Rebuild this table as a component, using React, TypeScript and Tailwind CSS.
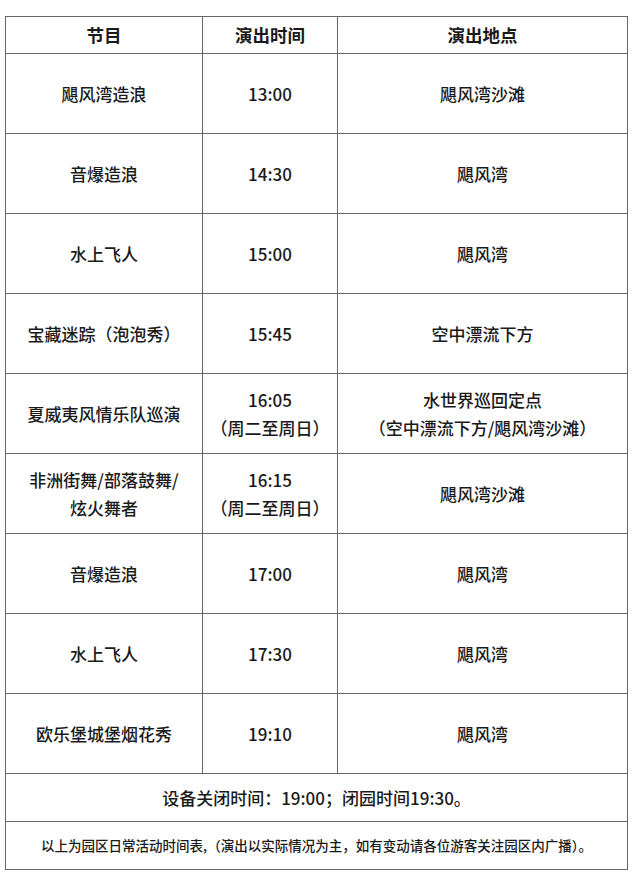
import React from "react";

const rows: [string[], string[], string[]][] = [
  [["飓风湾造浪"], ["13:00"], ["飓风湾沙滩"]],
  [["音爆造浪"], ["14:30"], ["飓风湾"]],
  [["水上飞人"], ["15:00"], ["飓风湾"]],
  [["宝藏迷踪（泡泡秀）"], ["15:45"], ["空中漂流下方"]],
  [["夏威夷风情乐队巡演"], ["16:05", "（周二至周日）"], ["水世界巡回定点", "（空中漂流下方/飓风湾沙滩）"]],
  [["非洲街舞/部落鼓舞/", "炫火舞者"], ["16:15", "（周二至周日）"], ["飓风湾沙滩"]],
  [["音爆造浪"], ["17:00"], ["飓风湾"]],
  [["水上飞人"], ["17:30"], ["飓风湾"]],
  [["欧乐堡城堡烟花秀"], ["19:10"], ["飓风湾"]],
];

function Cell({ lines, bold }: { lines: string[]; bold?: boolean }) {
  return (
    <div
      className={`flex flex-col items-center justify-center border-r border-b border-[#666666] text-center leading-[28px] ${
        bold ? "h-[37px] font-bold text-[17.5px]" : "h-[80px] font-medium text-[17px]"
      }`}
    >
      {lines.map((l, i) => (
        <div key={i}>{l}</div>
      ))}
    </div>
  );
}

export default function App() {
  return (
    <div
      className="w-[642px] h-[884px] bg-white pt-[16px] pl-[5px] text-[#1a1a1a]"
      style={{ fontFamily: '"Noto Sans CJK SC", "Noto Sans", sans-serif' }}
    >
      <div className="w-[623px] border-l border-t border-[#666666]">
        <div className="grid grid-cols-[197px_135px_290px]">
          <Cell lines={["节目"]} bold />
          <Cell lines={["演出时间"]} bold />
          <Cell lines={["演出地点"]} bold />
          {rows.map((r, i) => (
            <React.Fragment key={i}>
              <Cell lines={r[0]} />
              <Cell lines={r[1]} />
              <Cell lines={r[2]} />
            </React.Fragment>
          ))}
        </div>
        <div className="flex h-[48px] items-center justify-center border-r border-b border-[#666666] text-[17px] font-medium">
          设备关闭时间：19:00；闭园时间19:30。
        </div>
        <div className="flex h-[48px] items-center justify-center border-r border-b border-[#666666] text-[13.5px] font-medium">
          以上为园区日常活动时间表,（演出以实际情况为主，如有变动请各位游客关注园区内广播）。
        </div>
      </div>
    </div>
  );
}
